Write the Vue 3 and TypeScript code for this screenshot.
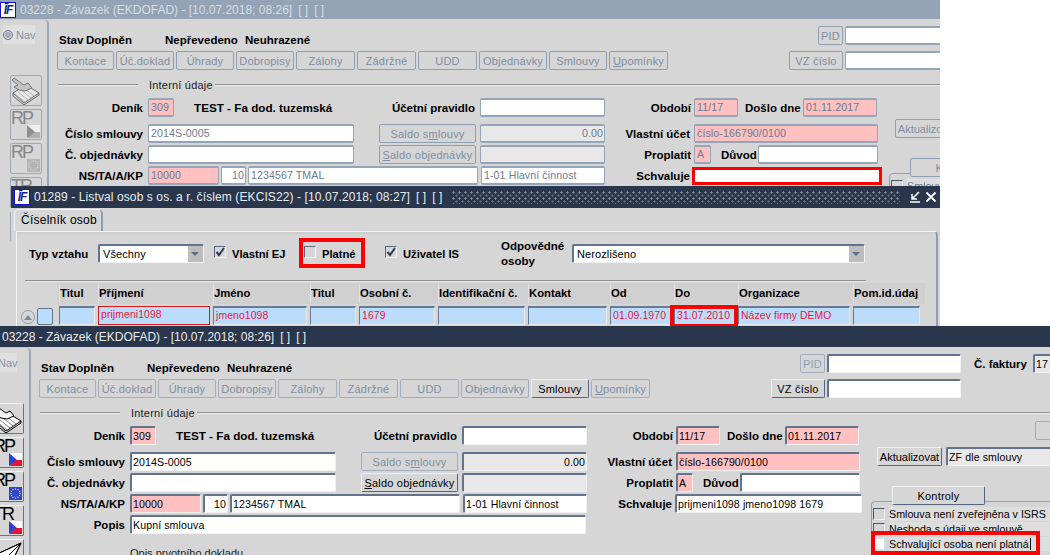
<script setup lang="ts">
interface ToolButton { text: string; hot?: string; rest?: string; on?: boolean }
interface FormWindow { key: string; dim: boolean; approver: string; title: string }

const forms: FormWindow[] = [
  { key: 'back', dim: true, approver: '', title: '03228 - Závazek (EKDOFAD) - [10.07.2018; 08:26]' },
  { key: 'front', dim: false, approver: 'prijmeni1098 jmeno1098 1679', title: '03228 - Závazek (EKDOFAD) - [10.07.2018; 08:26]' },
]

const toolbar: ToolButton[] = [
  { text: 'Kontace' },
  { text: 'Úč.doklad' },
  { text: 'Úhrady' },
  { text: 'Dobropisy' },
  { text: 'Zálohy' },
  { text: 'Zádržné' },
  { text: 'UDD' },
  { text: 'Objednávky' },
  { text: 'Smlouvy', on: true },
  { text: '', hot: 'U', rest: 'pomínky' },
]

const rail = [
  { key: 'note', text: '', flag: '' },
  { key: 'rp-cz', text: 'RP', flag: 'cz' },
  { key: 'rp-eu', text: 'RP', flag: 'eu' },
  { key: 'tr-cz', text: 'TR', flag: 'cz' },
  { key: 'plane', text: '', flag: '' },
]

const euStars = [
  [6.5, 2], [9, 2.7], [10.6, 4.5], [11, 6.5], [10.6, 8.5], [9, 10.3],
  [6.5, 11], [4, 10.3], [2.4, 8.5], [2, 6.5], [2.4, 4.5], [4, 2.7],
]

const columns = ['Titul', 'Příjmení', 'Jméno', 'Titul', 'Osobní č.', 'Identifikační č.', 'Kontakt', 'Od', 'Do', 'Organizace', 'Pom.id.údaj']
const cells = [
  { v: '', c: '' },
  { v: 'prijmeni1098', c: 'focus' },
  { v: 'jmeno1098', c: '' },
  { v: '', c: '' },
  { v: '1679', c: '' },
  { v: '', c: '' },
  { v: '', c: '' },
  { v: '01.09.1970', c: '' },
  { v: '31.07.2010', c: 'marked' },
  { v: 'Název firmy DEMO', c: '' },
  { v: '', c: '' },
]
</script>

<template>
  <div class="desk">
    <section v-for="f in forms" :key="f.key" class="win" :class="[f.key, { dim: f.dim }]">
      <header class="bar">
        <span v-if="f.dim" class="logo"><i>ĪF</i></span>
        <span class="bar-title">{{ f.title }}</span>
        <span class="bar-tail">[ ]</span>
        <span class="bar-tail">[ ]</span>
      </header>

      <div class="body">
        <aside class="rail">
          <div class="nav"><span class="radio"></span><span>Nav</span></div>
          <div class="rail-icons">
            <button v-for="r in rail" :key="r.key" class="rail-btn" type="button">
              <span v-if="r.text" class="rail-text">{{ r.text }}</span>
              <svg v-if="r.flag === 'cz'" class="flag" viewBox="0 0 13 13" width="13" height="13">
                <rect width="13" height="13" class="fl-w" />
                <polygon points="0,13 13,13 13,7 7,7" class="fl-r" />
                <polygon points="0,0 8,7 0,13" class="fl-b" />
              </svg>
              <svg v-if="r.flag === 'eu'" class="flag" viewBox="0 0 13 13" width="13" height="13">
                <rect width="13" height="13" class="fl-eu" />
                <rect v-for="(s, i) in euStars" :key="i" :x="s[0] - 0.6" :y="s[1] - 0.6" width="1.2" height="1.2" class="fl-st" />
              </svg>
              <svg v-if="r.key === 'note'" class="glyph" viewBox="0 0 32 30" width="32" height="30">
                <polygon points="3,17 16,9 29,17 14,27" class="g-paper" />
                <path d="M5,18 L15,26 M8,16 L18,24 M11,14 L21,22 M14,12 L24,20" class="g-thin" />
                <path d="M3,17 L3,20 L14,29 L29,19 L29,17" class="g-line" />
                <path d="M4,2 L14,9 L18,7 L22,12 L15,15 L9,14 L4,11 L8,9 L2,4 Z" class="g-hand" />
              </svg>
              <svg v-if="r.key === 'plane'" class="glyph" viewBox="0 0 32 30" width="32" height="30">
                <polygon points="3,15 29,3 18,26 14,18" class="g-paper" />
                <path d="M3,15 L29,3 L14,18 L18,26 L29,3" class="g-line" />
                <path d="M14,18 L12,24 L17,21" class="g-line" />
              </svg>
            </button>
          </div>
        </aside>

        <div class="main">
          <div class="head">
            <div class="head-left">
              <div class="status">
                <span class="st-a">Stav</span>
                <span class="st-b">Doplněn</span>
                <span class="st-c">Nepřevedeno</span>
                <span class="st-d">Neuhrazené</span>
              </div>
              <div class="toolbar">
                <button v-for="b in toolbar" :key="b.text + b.rest" class="btn" :class="{ on: !f.dim && b.on }" type="button">
                  <template v-if="b.hot"><u>{{ b.hot }}</u>{{ b.rest }}</template>
                  <template v-else>{{ b.text }}</template>
                </button>
              </div>
            </div>
            <div class="head-right">
              <div class="hr-row">
                <button class="btn pid" :class="{ half: !f.dim }" type="button">PID</button>
                <div class="field f-pid"></div>
                <template v-if="!f.dim">
                  <span class="lbl l-fakt">Č. faktury</span>
                  <div class="field grey f-fakt">17</div>
                </template>
              </div>
              <div class="hr-row vz">
                <button class="btn vzc" :class="{ on: !f.dim }" type="button">VZ číslo</button>
                <div class="field f-pid"></div>
              </div>
            </div>
          </div>

          <div class="sect">
            <span class="sect-l"></span>
            <span class="sect-t">Interní údaje</span>
            <span class="sect-r"></span>
          </div>

          <div class="form">
            <div class="form-left">
              <div class="row r-first">
                <span class="lbl w-main">Deník</span>
                <div class="field pink ml5 w26">309</div>
                <span class="title-val">TEST - Fa dod. tuzemská</span>
                <span class="lbl w131">Účetní pravidlo</span>
                <div class="field ml5 w125"></div>
                <span class="lbl w86">Období</span>
                <div class="field pink ml3 w44">11/17</div>
                <span class="lbl ml7 w54">Došlo dne</span>
                <div class="field pink ml4 w74">01.11.2017</div>
              </div>
              <div class="row r-second">
                <span class="lbl w-main">Číslo smlouvy</span>
                <div class="field ml5 w206">2014S-0005</div>
                <button class="btn ml25 w97" type="button">Saldo s<u>m</u>louvy</button>
                <div class="field grey num ml4 w125">0.00</div>
                <span class="lbl w85">Vlastní účet</span>
                <div class="field pink ml4 w184">číslo-166790/0100</div>
              </div>
              <div class="row">
                <span class="lbl w-main">Č. objednávky</span>
                <div class="field ml5 w206"></div>
                <button class="btn ml25 w97" :class="{ on: !f.dim }" type="button"><u>S</u>aldo objednávky</button>
                <div class="field grey ml4 w125"></div>
                <span class="lbl w86">Proplatit</span>
                <div class="field pink ml3 w17">A</div>
                <span class="lbl ml10 w34">Důvod</span>
                <div class="field ml3 w120"></div>
              </div>
              <div class="row">
                <span class="lbl w-main">NS/TA/A/KP</span>
                <div class="field pink ml5 w71">10000</div>
                <div class="field num ml2 w25">10</div>
                <div class="field ml2 w230">1234567 TMAL</div>
                <div class="field ml3 w124">1-01 Hlavní činnost</div>
                <span class="lbl w85">Schvaluje</span>
                <div class="field ml3 w187" :class="{ ringed: f.dim }">{{ f.approver }}</div>
              </div>
              <template v-if="!f.dim">
                <div class="row">
                  <span class="lbl w-main">Popis</span>
                  <div class="field ml5 w456">Kupní smlouva</div>
                </div>
                <div class="opis">Opis prvotního dokladu</div>
              </template>
            </div>

            <div class="form-right">
              <button class="btn mini" type="button"></button>
              <div class="act">
                <button class="btn akt" :class="{ on: !f.dim }" type="button">Aktualizovat</button>
                <div class="field grey act-sel">ZF dle smlouvy</div>
              </div>
              <button class="btn tabbtn" :class="{ on: !f.dim }" type="button">Kontroly</button>
              <div class="checks">
                <div class="check-row">
                  <span class="box"></span><span class="check-t">Smlouva není zveřejněna v ISRS</span>
                </div>
                <template v-if="!f.dim">
                  <div class="check-row">
                    <span class="box"></span><span class="check-t">Neshoda s údaji ve smlouvě</span>
                  </div>
                  <div class="check-row last">
                    <span class="box active"></span><span class="check-t"><span class="caret">Schvalující osoba není platná</span></span>
                    <span class="mark mark-check"></span>
                  </div>
                </template>
              </div>
            </div>
          </div>
        </div>
      </div>
    </section>

    <section class="win list">
      <header class="bar bar-list">
        <span class="logo"><i>ĪF</i></span>
        <span class="bar-title">01289 - Listval osob s os. a r. číslem (EKCIS22) - [10.07.2018; 08:27]</span>
        <span class="bar-tail">[ ]</span>
        <span class="bar-tail">[ ]</span>
        <span class="dots"></span>
        <svg class="wbtn" viewBox="0 0 12 12" width="12" height="12">
          <path d="M10,1 L3,8 M3,3 L3,8 L8,8 M1,11 L11,11" fill="none" stroke="#fff" stroke-width="1.5" />
        </svg>
        <svg class="wbtn close" viewBox="0 0 12 12" width="12" height="12">
          <path d="M1.5,1.5 L10.5,10.5 M10.5,1.5 L1.5,10.5" fill="none" stroke="#fff" stroke-width="1.8" />
        </svg>
      </header>
      <div class="tabs"><div class="tab">Číselník osob</div></div>
      <div class="panel">
        <div class="filter">
          <span class="lbl-l f-typ">Typ vztahu</span>
          <div class="select s-typ"><span>Všechny</span><span class="arrow"></span></div>
          <span class="cb checked f-cb1">
            <svg viewBox="0 0 12 12" width="12" height="12"><path d="M2.5,6 L5,9 L10,2" fill="none" stroke="#2c3a50" stroke-width="2" /></svg>
          </span>
          <span class="lbl-l f-t1">Vlastní EJ</span>
          <span class="platne">
            <span class="cb"></span>
            <span class="lbl-l f-t2">Platné</span>
            <span class="mark mark-platne"></span>
          </span>
          <span class="cb checked f-cb3">
            <svg viewBox="0 0 12 12" width="12" height="12"><path d="M2.5,6 L5,9 L10,2" fill="none" stroke="#2c3a50" stroke-width="2" /></svg>
          </span>
          <span class="lbl-l f-t3">Uživatel IS</span>
          <span class="lbl-l f-odp">Odpovědné osoby</span>
          <div class="select s-odp"><span>Nerozlišeno</span><span class="arrow"></span></div>
        </div>
        <div class="rule"></div>
        <div class="table-head grid-cols">
          <span v-for="(c, i) in columns" :key="i" class="th">{{ c }}</span>
        </div>
        <div class="table-row">
          <span class="scroll-up"><span class="tri"></span></span>
          <span class="row-box"></span>
          <div class="grid-cols data">
            <div v-for="(c, i) in cells" :key="i" class="td" :class="c.c">
              {{ c.v }}
              <span v-if="c.c === 'marked'" class="mark mark-do"></span>
            </div>
          </div>
        </div>
      </div>
    </section>
  </div>
</template>

<style scoped>
.desk {
  position: relative;
  width: 1050px;
  height: 555px;
  overflow: hidden;
  background: #fff;
  font-family: "Liberation Sans", Arial, sans-serif;
  font-size: 11px;
  color: #000;
}
button { font-family: inherit; padding: 0; margin: 0; }

/* windows on the desktop */
.win { position: absolute; overflow: hidden; background: #d6d6d6; }
.back { left: 0; top: 0; width: 940px; height: 328px; z-index: 1; }
.list { left: 11px; top: 186px; width: 929px; height: 142px; z-index: 2; }
.front { left: 0; top: 326px; width: 1050px; height: 229px; z-index: 3; }

.bar {
  display: flex;
  align-items: center;
  height: 21px;
  background: #29364b;
  color: #e8edf2;
  font-size: 12px;
  white-space: nowrap;
  padding-left: 2px;
  box-sizing: border-box;
}
.dim .bar { height: 19px; background: #94a3b5; color: #d6dde5; padding-left: 0; }
.bar-list { height: 22px; padding-left: 3px; letter-spacing: 0.1px; }
.logo {
  width: 16px;
  height: 16px;
  margin-right: 4px;
  background: #fff;
  border: 1px solid #1010d0;
  box-sizing: border-box;
  color: #101f96;
  text-align: center;
  font: italic bold 12px/14px "Liberation Sans", sans-serif;
  letter-spacing: -1px;
  flex: none;
}
.logo i { font-style: italic; }
.bar-tail { margin-left: 6px; }
.dots {
  flex: 1;
  height: 13px;
  margin: 0 9px 0 9px;
  background-image:
    radial-gradient(circle at 1.5px 1.5px, #8d98a8 0.9px, transparent 1.2px),
    radial-gradient(circle at 4.5px 4.5px, #677488 0.9px, transparent 1.2px);
  background-size: 6px 6px;
}
.wbtn { flex: none; margin-right: 4px; }
.close { margin-right: 3px; }

.body { display: flex; height: 100%; }
.front .body { margin-left: -18px; }

/* left rail */
.rail {
  flex: none;
  width: 49px;
  height: 400px;
  box-sizing: border-box;
  border-right: 2px solid #9aa8ba;
  border-top: 1px solid #c4c9d0;
  border-top-right-radius: 5px;
}
.nav {
  display: flex;
  align-items: center;
  gap: 3px;
  width: 32px;
  height: 19px;
  margin: 5px 0 0 3px;
  box-sizing: border-box;
  background: #e0e0e0;
  color: #8393a6;
  font-size: 11px;
}
.radio {
  width: 10px;
  height: 10px;
  border-radius: 50%;
  border: 1px solid #6f7f95;
  background: #a6adb6;
  flex: none;
  box-shadow: inset 0 0 0 1px #d6d6d6;
  box-sizing: border-box;
}
.rail-icons { display: flex; flex-direction: column; gap: 3px; margin: 31px 0 0 10px; }
.rail-btn {
  position: relative;
  width: 32px;
  height: 31px;
  box-sizing: border-box;
  border: 1px solid #9aa8ba;
  border-radius: 2px;
  background: #d6d6d6;
  overflow: hidden;
  display: block;
}
.front .rail-btn { border-color: #f2f2f2 #65748e #65748e #f2f2f2; }
.rail-text {
  position: absolute;
  left: 0;
  top: -3px;
  font-size: 18px;
  line-height: 22px;
  letter-spacing: -2px;
  color: #868686;
}
.front .rail-text { color: #000; }
.flag { position: absolute; right: 1px; bottom: 1px; }
.fl-w { fill: #efefef; }
.fl-r { fill: #b0b0b0; }
.fl-b { fill: #8e8e8e; }
.fl-eu { fill: #b4b4b4; }
.fl-st { fill: #d6d6d6; }
.front .fl-w { fill: #fff; }
.front .fl-r { fill: #e8132a; }
.front .fl-b { fill: #2f3fd0; }
.front .fl-eu { fill: #2f46c8; }
.front .fl-st { fill: #ffe21a; }
.glyph { position: absolute; left: -1px; top: 0; }
.g-paper { fill: #e8e8e8; stroke: #6a6a6a; stroke-width: 1; }
.g-thin { fill: none; stroke: #9a9a9a; stroke-width: 0.7; }
.g-line { fill: none; stroke: #6a6a6a; stroke-width: 1; }
.g-hand { fill: #c4c4c4; stroke: #777; stroke-width: 1; }
.front .g-paper { fill: #fff; stroke: #000; }
.front .g-thin { stroke: #555; }
.front .g-line { stroke: #000; }
.front .g-hand { fill: #f2f2f2; stroke: #000; }

/* form */
.main { flex: none; width: 1100px; }
.head { display: grid; grid-template-columns: 740px 1fr; height: 65px; }
.status {
  display: flex;
  align-items: center;
  height: 14px;
  margin-top: 14px;
  font-weight: 700;
  font-size: 11.5px;
  white-space: nowrap;
}
.st-a { margin-left: 10px; width: 27px; }
.st-b { width: 79px; }
.st-c { width: 80px; }
.toolbar {
  display: grid;
  grid-template-columns: 57px 58px 58px 58px 59px 59px 59px 68px 58px 59px;
  gap: 2px;
  margin: 4px 0 0 8px;
}
.btn {
  display: block;
  height: 19px;
  box-sizing: border-box;
  border: 1px solid #a0aebf;
  border-radius: 2px;
  background: #d6d6d6;
  color: #7f8ea2;
  font-size: 11px;
  line-height: 16px;
  letter-spacing: 0.2px;
  white-space: nowrap;
  text-align: center;
  overflow: hidden;
}
.dim .btn { border-color: #8e9fb3; }
.btn.on { color: #000; border-color: #f0f0f0 #56657f #56657f #f0f0f0; }
.btn.half { color: #8fa0b5; }
.head-right { padding-top: 7px; }
.hr-row { display: flex; align-items: center; margin-left: 29px; height: 19px; }
.hr-row.vz { margin: 6px 0 0 0; }
.pid { width: 25px; }
.vzc { width: 54px; }
.f-pid { width: 134px; margin-left: 2px; }
.l-fakt { width: 60px; margin-left: 6px; }
.f-fakt { width: 40px; margin-left: 6px; }

.sect { display: flex; align-items: center; height: 13px; margin-top: -6px; }
.sect-l, .sect-r { height: 1px; background: #8f8f8f; box-shadow: 0 1px 0 #ededed; }
.sect-l { width: 80px; margin-left: 9px; }
.sect-t { margin-left: 11px; width: 66px; color: #1b1b1b; white-space: nowrap; font-size: 11px; letter-spacing: 0.2px; }
.sect-r { flex: 1; }

.form { display: flex; margin-top: 2px; }
.form-left { flex: none; width: 831px; padding-top: 5px; }
.row { display: flex; align-items: center; height: 19px; margin-bottom: 2px; }
.r-first { margin-bottom: 7px; }
.lbl {
  flex: none;
  text-align: right;
  font-weight: 700;
  font-size: 11.5px;
  line-height: 14px;
  padding-top: 1px;
  box-sizing: border-box;
  white-space: nowrap;
}
.w-main { width: 94px; }
.w131 { width: 131px; }
.w86 { width: 86px; }
.w85 { width: 85px; }
.w54 { width: 54px; }
.w34 { width: 34px; }
.title-val { flex: none; width: 150px; margin-left: 20px; font-weight: 700; font-size: 11.7px; white-space: nowrap; }

.field {
  flex: none;
  height: 19px;
  box-sizing: border-box;
  border-style: solid;
  border-width: 2px 1px 1px 2px;
  border-color: #64738d #f2f2f2 #f2f2f2 #64738d;
  border-radius: 2px;
  background: #fff;
  padding: 0 1px;
  font-size: 10.6px;
  line-height: 16px;
  letter-spacing: 0.1px;
  white-space: nowrap;
  overflow: hidden;
}
.dim .field { border-color: #95a5b8; color: #6c7b92; border-width: 2px 1px 2px 1px; padding-left: 2px; line-height: 15px; }
.pink { background: #ffc0c0; }
.grey { background: #e8e8e8; }
.num { text-align: right; }
.ml2 { margin-left: 2px; }
.ml3 { margin-left: 3px; }
.ml4 { margin-left: 4px; }
.ml5 { margin-left: 5px; }
.ml7 { margin-left: 7px; }
.ml10 { margin-left: 10px; }
.ml25 { margin-left: 25px; }
.w17 { width: 17px; }
.w25 { width: 25px; }
.w26 { width: 26px; }
.w44 { width: 44px; }
.w71 { width: 71px; }
.w74 { width: 74px; }
.w97 { width: 97px; flex: none; }
.w120 { width: 120px; }
.w124 { width: 124px; }
.w125 { width: 125px; }
.w184 { width: 184px; }
.w187 { width: 187px; }
.w206 { width: 206px; }
.w230 { width: 230px; }
.w456 { width: 456px; }
.dim .ringed { border: 3px solid #ff0000; border-radius: 0; height: 18px; width: 190px; margin-left: 2px; }
.opis { margin: 13px 0 0 99px; color: #222; font-size: 11px; white-space: nowrap; }

.form-right { flex: none; width: 300px; }
.mini { width: 40px; margin-left: 173px; }
.act { display: flex; margin: 7px 0 0 15px; }
.akt { width: 65px; flex: none; letter-spacing: 0; }
.act-sel { width: 200px; margin-left: 4px; }
.tabbtn { position: relative; z-index: 1; width: 93px; margin: 20px 0 0 30px; }
.checks {
  width: 300px;
  height: 70px;
  margin: -4px 0 0 9px;
  padding-top: 4px;
  box-sizing: border-box;
  border: 1px solid #8e9fb3;
  border-radius: 4px 0 0 0;
}
.check-row { position: relative; display: flex; align-items: center; height: 15px; padding-left: 1px; }
.box {
  flex: none;
  width: 12px;
  height: 12px;
  box-sizing: border-box;
  border-style: solid;
  border-width: 1px;
  border-color: #4b596f #f0f0f0 #f0f0f0 #4b596f;
  background: #d6d6d6;
}
.box.active { background: #fff; border-color: #cfe0f5; outline: 2px solid #cfe0f5; outline-offset: -1px; }
.check-t {
  margin-left: 4px;
  padding-right: 130px;
  background: #dedede;
  font-size: 10.7px;
  line-height: 14px;
  white-space: nowrap;
}
.dim .check-t { color: #6c7b92; }
.caret { border-right: 1px solid #000; padding-right: 1px; }

/* red annotations over the controls */
.mark { position: absolute; border: 4px solid #ff0000; box-sizing: border-box; pointer-events: none; z-index: 5; }
.mark-check { left: -1px; top: -5px; width: 169px; height: 24px; }
.mark-platne { left: -5px; top: -8px; width: 66px; height: 30px; }
.mark-do { left: -5px; top: -3px; width: 68px; height: 23px; }

/* list window */
.tabs { display: flex; height: 23px; padding-left: 3px; }
.tab {
  width: 89px;
  box-sizing: border-box;
  border: 1px solid #f4f4f4;
  border-bottom: 0;
  border-right: 2px solid #8e9fb3;
  border-radius: 5px 5px 0 0;
  margin-top: 1px;
  padding: 3px 0 0 6px;
  font-size: 12px;
  letter-spacing: 0.25px;
  white-space: nowrap;
}
.panel {
  margin: 0 2px 0 5px;
  height: 100px;
  box-sizing: border-box;
  border-top: 1px solid #f4f4f4;
  border-left: 1px solid #f4f4f4;
  border-right: 2px solid #8e9fb3;
  border-top-right-radius: 4px;
  box-shadow: inset 0 2px 0 #cecece;
}
.filter { display: flex; align-items: center; height: 19px; margin-top: 12px; }
.lbl-l { flex: none; font-weight: 700; font-size: 11.5px; white-space: nowrap; }
.f-typ { width: 69px; margin-left: 12px; }
.select {
  flex: none;
  display: flex;
  justify-content: space-between;
  height: 19px;
  box-sizing: border-box;
  border-style: solid;
  border-width: 2px 1px 1px 2px;
  border-color: #64738d #f2f2f2 #f2f2f2 #64738d;
  border-radius: 2px;
  background: #fff;
  padding-left: 3px;
  font-size: 11px;
  line-height: 16px;
  letter-spacing: 0.1px;
}
.arrow { position: relative; width: 15px; background: #bdbdbd; }
.arrow::after {
  content: "";
  position: absolute;
  left: 3px;
  top: 6px;
  border: 4px solid transparent;
  border-top: 4px solid #5f6f8a;
  border-bottom: 0;
}
.s-typ { width: 106px; }
.s-odp { width: 293px; }
.cb {
  flex: none;
  display: block;
  width: 12px;
  height: 12px;
  box-sizing: border-box;
  border-style: solid;
  border-width: 1px;
  border-color: #5a687f #f4f4f4 #f4f4f4 #5a687f;
  margin-bottom: 3px;
}
.cb svg { display: block; margin: -1px 0 0 -1px; }
.f-cb1 { margin-left: 10px; }
.f-t1 { margin-left: 6px; width: 61px; font-size: 11.2px; }
.platne { position: relative; display: flex; align-items: center; flex: none; margin-left: 11px; width: 56px; }
.f-t2 { margin-left: 6px; font-size: 11.2px; }
.f-cb3 { margin-left: 25px; }
.f-t3 { margin-left: 6px; width: 98px; font-size: 11.2px; }
.f-odp { width: 71px; white-space: normal; line-height: 15px; }
.rule { height: 1px; margin: 17px 0 0 8px; width: 841px; background: #8f8f8f; box-shadow: 0 1px 0 #e8e8e8; }
.grid-cols {
  display: grid;
  grid-template-columns: 39px 115px 97px 49px 79px 90px 82px 64px 64px 115px 70px;
}
.table-head {
  width: 868px;
  height: 21px;
  margin: 2px 0 0 40px;
  padding-left: 3px;
  box-sizing: border-box;
  background: #d0d0d0;
}
.th {
  font-weight: 700;
  font-size: 11.3px;
  line-height: 21px;
  white-space: nowrap;
  overflow: hidden;
  box-shadow: -2px 0 0 -1px #e2e2e2;
}
.table-row { display: flex; margin-top: 2px; height: 20px; }
.scroll-up {
  flex: none;
  width: 14px;
  height: 14px;
  margin: 4px 0 0 4px;
  border-radius: 50%;
  border: 1px solid #8e9fb3;
  box-sizing: border-box;
  display: flex;
  align-items: center;
  justify-content: center;
}
.tri { width: 0; height: 0; border: 4px solid transparent; border-top: 0; border-bottom: 5px solid #7c8798; }
.row-box {
  flex: none;
  width: 16px;
  height: 17px;
  margin: 2px 0 0 2px;
  box-sizing: border-box;
  border: 1px solid #65748e;
  border-radius: 2px;
  background: #bbdcfb;
}
.data { flex: none; margin-left: 6px; }
.td {
  position: relative;
  margin-right: 3px;
  height: 19px;
  box-sizing: border-box;
  border-style: solid;
  border-width: 2px 1px 1px 1px;
  border-color: #6a7a96 #e8e8e8 #e8e8e8 #6a7a96;
  background: #bbdcfb;
  color: #e8173f;
  padding-left: 2px;
  font-size: 10.4px;
  line-height: 16px;
  letter-spacing: 0.1px;
  white-space: nowrap;
}
.td.focus { border: 1px solid #d21a1a; }
</style>

<style>
html, body { margin: 0; background: #fff; }
</style>
